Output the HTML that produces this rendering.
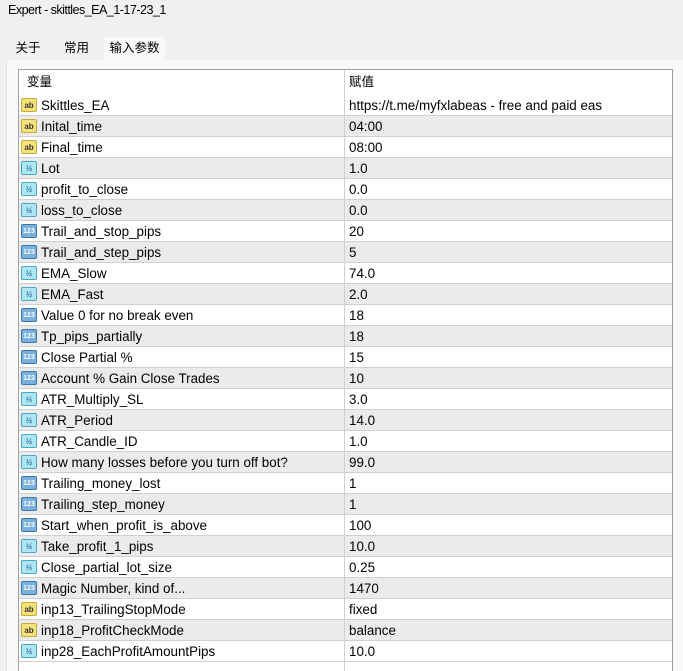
<!DOCTYPE html>
<html><head><meta charset="utf-8"><style>
*{margin:0;padding:0;box-sizing:border-box}
body{width:683px;height:671px;overflow:hidden;background:#f0f0f0;font-family:"Liberation Sans","Noto Sans CJK SC",sans-serif;font-size:13.4px;color:#000;position:relative}
.title{position:absolute;left:8px;top:3px;font-size:12.6px;letter-spacing:-0.55px}
.tab{position:absolute;top:37px;height:23px;line-height:22px;text-align:center;font-size:12.5px;background:#f0f0f0}
.panel{position:absolute;left:6px;top:60px;width:677px;height:611px;background:#f9f9f9;border-left:1px solid #e0e0e0}
.box{position:absolute;left:18px;top:69px;width:655px;height:602px;background:#fff;border:1px solid #a0a0a0;border-bottom:none;overflow:hidden}
.row{position:absolute;left:0;width:653px;height:21px;border-bottom:1px solid #d0d0d0;line-height:21px}
.row.g{background:#ebebeb}
.n{position:absolute;left:22px;top:0}
.v{position:absolute;left:325px;top:0;border-left:1px solid #d0d0d0;padding-left:4px;height:21px;width:328px}
.ic{position:absolute;left:2px;top:3px;width:16px;height:14px;border-radius:2px;font-size:8px;line-height:13px;text-align:center;font-weight:bold}
.ab{background:#f6e27a;border:1px solid #c8a93a;color:#333}
.vz{background:#aee6f2;border:1px solid #4aa8c4;color:#2470a0;font-style:italic}
.nm{background:#7ab1dc;border:1px solid #3b78b0;color:#fff;font-size:7px}
.hdr{position:absolute;left:0;top:0;width:653px;height:25px;line-height:25px;font-size:12.5px}
</style></head><body>
<div class="title">Expert - skittles_EA_1-17-23_1</div>
<div class="tab" style="left:5px;width:46px">关于</div>
<div class="tab" style="left:53px;width:47px">常用</div>
<div class="tab" style="left:104px;width:61px;background:#f9f9f9">输入参数</div>
<div class="panel"></div>
<div class="box">
<div class="hdr"><span style="position:absolute;left:8px">变量</span><span style="position:absolute;left:325px;padding-left:4px;border-left:1px solid #d0d0d0;height:25px">赋值</span></div>
<div id="rows"></div>
</div>
<script>
const d=[["ab","Skittles_EA","https://t.me/myfxlabeas - free and paid eas"],["ab","Inital_time","04:00"],["ab","Final_time","08:00"],["vz","Lot","1.0"],["vz","profit_to_close","0.0"],["vz","loss_to_close","0.0"],["nm","Trail_and_stop_pips","20"],["nm","Trail_and_step_pips","5"],["vz","EMA_Slow","74.0"],["vz","EMA_Fast","2.0"],["nm","Value 0 for no break even","18"],["nm","Tp_pips_partially","18"],["nm","Close Partial %","15"],["nm","Account % Gain Close Trades","10"],["vz","ATR_Multiply_SL","3.0"],["vz","ATR_Period","14.0"],["vz","ATR_Candle_ID","1.0"],["vz","How many losses before you turn off bot?","99.0"],["nm","Trailing_money_lost","1"],["nm","Trailing_step_money","1"],["nm","Start_when_profit_is_above","100"],["vz","Take_profit_1_pips","10.0"],["vz","Close_partial_lot_size","0.25"],["nm","Magic Number, kind of...","1470"],["ab","inp13_TrailingStopMode","fixed"],["ab","inp18_ProfitCheckMode","balance"],["vz","inp28_EachProfitAmountPips","10.0"]];
const t={ab:"ab",vz:"½",nm:"123"};let h="";
d.forEach((r,i)=>{h+=`<div class="row${i%2?' g':''}" style="top:${25+21*i}px"><div class="ic ${r[0]}">${t[r[0]]}</div><span class="n">${r[1]}</span><span class="v">${r[2]}</span></div>`});
h+=`<div class="row" style="top:${25+21*27}px;border-bottom:none"><span class="v"></span></div>`;
document.getElementById("rows").innerHTML=h;
</script>
</body></html>
